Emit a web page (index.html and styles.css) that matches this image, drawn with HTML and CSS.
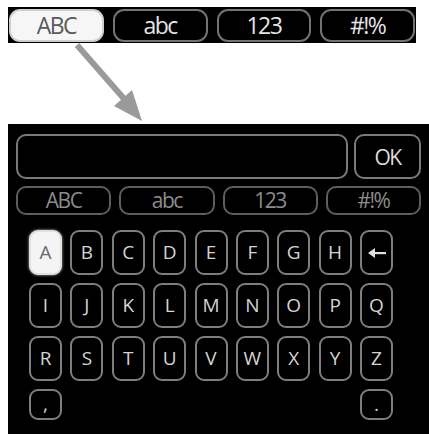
FILE: index.html
```html
<!DOCTYPE html>
<html>
<head>
<meta charset="utf-8">
<link rel="stylesheet" href="styles.css">
</head>
<body>
<div class="topbar">
  <div class="tb-btn sel">ABC</div>
  <div class="tb-btn">abc</div>
  <div class="tb-btn">123</div>
  <div class="tb-btn">#!%</div>
</div>
<div class="pointer">
  <svg width="429" height="81" viewBox="0 0 429 81">
    <line x1="77" y1="2" x2="126" y2="58" stroke="#9a9a9a" stroke-width="6"/>
    <polygon points="142,78 114,63 132,47" fill="#9a9a9a"/>
  </svg>
</div>
<div class="panel">
  <div class="entry">
    <div class="field"></div>
    <div class="ok">OK</div>
  </div>
  <div class="modes">
    <div class="mode">ABC</div>
    <div class="mode">abc</div>
    <div class="mode">123</div>
    <div class="mode">#!%</div>
  </div>
  <div class="keys">
    <div class="key sel">A</div>
    <div class="key">B</div>
    <div class="key">C</div>
    <div class="key">D</div>
    <div class="key">E</div>
    <div class="key">F</div>
    <div class="key">G</div>
    <div class="key">H</div>
    <div class="key"><svg width="20" height="12" viewBox="0 0 20 12"><polygon points="1,6 8,1 8,11" fill="#e0e0e0"/><rect x="7" y="5" width="12" height="2.2" fill="#e0e0e0"/></svg></div>
    <div class="key">I</div>
    <div class="key">J</div>
    <div class="key">K</div>
    <div class="key">L</div>
    <div class="key">M</div>
    <div class="key">N</div>
    <div class="key">O</div>
    <div class="key">P</div>
    <div class="key">Q</div>
    <div class="key">R</div>
    <div class="key">S</div>
    <div class="key">T</div>
    <div class="key">U</div>
    <div class="key">V</div>
    <div class="key">W</div>
    <div class="key">X</div>
    <div class="key">Y</div>
    <div class="key">Z</div>
    <div class="key small">,</div>
    <div class="key small last">.</div>
  </div>
</div>
</body>
</html>
```
FILE: styles.css
```css
html, body {
  margin: 0;
  padding: 0;
  background: #fff;
  font-family: "Open Sans", "DejaVu Sans", sans-serif;
}
body {
  width: 429px;
  height: 434px;
  overflow: hidden;
}
.topbar {
  margin: 7px 0 0 8px;
  width: 408px;
  height: 36px;
  box-sizing: border-box;
  background: #000;
  padding: 2px 1px 1px 1px;
  display: grid;
  grid-template-columns: repeat(4, 1fr);
  column-gap: 9px;
}
.tb-btn {
  border: 2px solid #727272;
  border-radius: 11px;
  color: #e4e4e4;
  font-size: 23px;
  font-weight: 400;
  letter-spacing: -1.5px;
  display: flex;
  align-items: center;
  justify-content: center;
  line-height: 1;
}
.tb-btn.sel {
  background: #f6f6f6;
  border-color: #cfcfcf;
  color: #5a5a5a;
}
.pointer {
  height: 81px;
}
.pointer svg {
  display: block;
}
.panel {
  margin-left: 8px;
  width: 421px;
  height: 310px;
  box-sizing: border-box;
  background: #000;
  padding: 10px 8px 0 8px;
}
.entry {
  display: flex;
  gap: 6px;
  height: 45px;
}
.field {
  flex: 1;
  border: 2px solid #7a7a7a;
  border-radius: 10px;
}
.ok {
  width: 67px;
  box-sizing: border-box;
  border: 2px solid #7a7a7a;
  border-radius: 10px;
  color: #dcdcdc;
  font-size: 21px;
  font-weight: 400;
  letter-spacing: -1.5px;
  display: flex;
  align-items: center;
  justify-content: center;
}
.modes {
  margin-top: 7px;
  height: 29px;
  display: grid;
  grid-template-columns: repeat(4, 1fr);
  column-gap: 8px;
}
.mode {
  border: 2px solid #5e5e5e;
  border-radius: 10px;
  color: #8c8c8c;
  font-size: 21px;
  font-weight: 400;
  letter-spacing: -1.5px;
  display: flex;
  align-items: center;
  justify-content: center;
  line-height: 1;
}
.keys {
  margin: 15px 0 0 13px;
  display: grid;
  grid-template-columns: repeat(9, 33px);
  grid-auto-rows: 45px;
  column-gap: 8.375px;
  row-gap: 8px;
}
.key {
  border: 2px solid #7e7e7e;
  border-radius: 9px;
  color: #d4d4d4;
  font-size: 19px;
  font-weight: 400;
  display: flex;
  align-items: center;
  justify-content: center;
  line-height: 1;
}
.key.sel {
  background: #f4f4f4;
  border-color: #e0e0e0;
  color: #6a6a6a;
  box-shadow: 0 0 3px #bbb;
}
.key.small {
  height: 31px;
  box-sizing: border-box;
}
.key.last {
  grid-column: 9;
}
```
